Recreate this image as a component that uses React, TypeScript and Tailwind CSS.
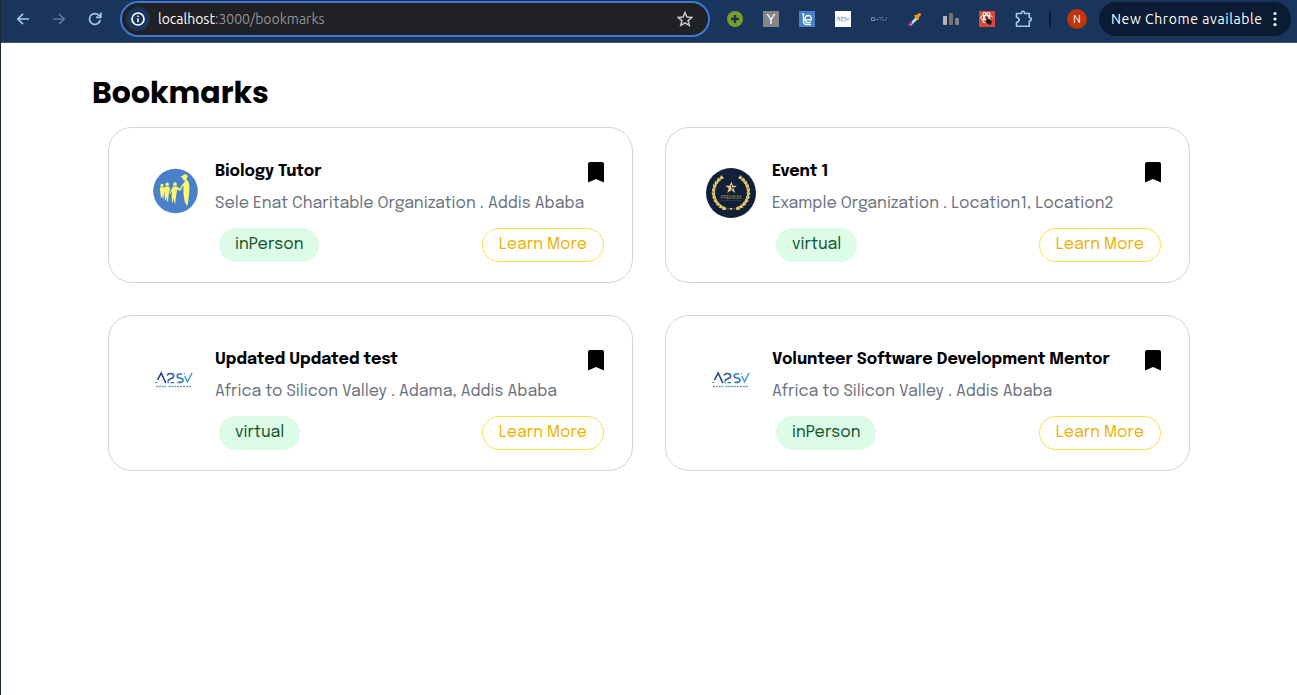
import React from "react";

type LogoKind = "family" | "premium" | "a2sv";

interface Bookmark {
  title: string;
  detail: string;
  mode: "inPerson" | "virtual";
  logo: LogoKind;
}

const bookmarks: Bookmark[] = [
  {
    title: "Biology Tutor",
    detail: "Sele Enat Charitable Organization . Addis Ababa",
    mode: "inPerson",
    logo: "family",
  },
  {
    title: "Event 1",
    detail: "Example Organization . Location1, Location2",
    mode: "virtual",
    logo: "premium",
  },
  {
    title: "Updated Updated test",
    detail: "Africa to Silicon Valley . Adama, Addis Ababa",
    mode: "virtual",
    logo: "a2sv",
  },
  {
    title: "Volunteer Software Development Mentor",
    detail: "Africa to Silicon Valley . Addis Ababa",
    mode: "inPerson",
    logo: "a2sv",
  },
];

function FamilyLogo() {
  return (
    <svg width="50" height="50" viewBox="0 0 50 50">
      <circle cx="26.5" cy="23" r="22.3" fill="#4a7fca" />
      <g fill="#f8f872">
        <circle cx="13" cy="17.300" r="1.600" />
        <path d="M11 19.300h4l.8 2.500-.8 1v3l-.5 5h-.8l-.5-4-.6 3h-.8l-.5-6-.5-2z" />
        <circle cx="18.200" cy="16.200" r="1.800" />
        <path d="M16 18.500h4.200l.9 4-1 1-.5 4-.5 6h-.9l-.7-5-.6 4h-.9l-.6-8-.8-3z" />
        <circle cx="26" cy="16.200" r="1.900" />
        <path d="M24 18.500h4l3 2.500 2-1.500v1.300l-2 2-3-1-.4 3.500-.7 4-.6 6h-.9l-.7-5-.8 4h-.9l-.3-6 .2-5-1.700 2.500-.8-.5z" />
        <path d="M31.500 8.500l2.500-1 1-1.300 2.800.2 1 2.300-1 1.300-.3 1.500 2.500 3 .5 6-.7 8-1 8-1 1.500-.8-2.500-1-.5-1.400-8-.2-6 .3-3.200-2.900 2.700-1-.4 3.100-4 1.700-2.100.4-1.500-1.700-.3-.4-1.500z" />
      </g>
    </svg>
  );
}

const laurel = Array.from({ length: 11 }, (_, i) => {
  const r = 108 + i * 12.4;
  const a = (r * Math.PI) / 180;
  return { x: 25 + 17.4 * Math.cos(a), y: 24.3 + 17.4 * Math.sin(a), r };
});

function LaurelBranch() {
  return (
    <g fill="#e3c56b">
      {laurel.map((leaf) => (
        <g key={leaf.r} transform={`translate(${leaf.x} ${leaf.y}) rotate(${leaf.r})`}>
          <ellipse cx="1.3" cy="0.6" rx="2.200" ry="1.150" transform="rotate(55)" />
          <ellipse cx="-1.3" cy="0.6" rx="2.200" ry="1.150" transform="rotate(-55)" />
        </g>
      ))}
    </g>
  );
}

function PremiumLogo() {
  return (
    <svg width="50" height="50" viewBox="0 0 50 50">
      <circle cx="25" cy="25" r="25" fill="#12203a" />
      <LaurelBranch />
      <g transform="translate(50 0) scale(-1 1)">
        <LaurelBranch />
      </g>
      <path d="M25.500 13.500l1.300 4.200 4.200.1-3.500 2.500 1.700 4.700-4-2.700-4 2.700 1.500-4.700-3.500-2.500 4.500-.1z" fill="#dfc98d" />
      <path d="M25.500 17v3l2.500-.5-2.500 1.500 1 2.500" stroke="#12203a" strokeWidth=".6" fill="none" />
      <text x="25" y="30.800" textAnchor="middle" fontSize="5" textLength="21" className="font-['Liberation_Sans']" fill="#9b8150">PREMIUM</text>
      <path d="M15 32.500h20" stroke="#5f553f" strokeWidth=".7" strokeDasharray="1.200 .8" />
      <path d="M21 40.800h8" stroke="#b99745" strokeWidth=".6" />
      <circle cx="25" cy="41" r="1" fill="#f2da80" />
    </svg>
  );
}

function A2svMark() {
  return (
    <>
      <g fill="none" strokeWidth="1.6">
        <path d="M8.500 24l3.700-7L16.800 27" stroke="#243d7c" />
        <path d="M18 19.500q1-2 3.300-2 3.400 0 3.400 2.400 0 1.800-2.500 2.500-3.200 1-3.200 3" stroke="#315d9c" />
        <path d="M33 18h-2.500q-2.300 0-2.300 2 0 1.800 2.500 2 3.300.2 3.300 2.200t-2.500 2.200h-3" stroke="#3778b4" />
        <path d="M35.800 20l2.700 5.800L43 17" stroke="#459ed1" />
      </g>
      <path d="M6.300 26.500h1.700M18.500 26.700h1.300M21.500 26.700h3.500M34.700 17.500h1.200" stroke="#3273ad" strokeWidth="1.200" />
    </>
  );
}

function A2svLogo() {
  return (
    <svg width="50" height="50" viewBox="0 0 50 50">
      <A2svMark />
      <path d="M7 30.500h10.500M19.500 30.500h23" stroke="#6f9dbd" strokeWidth="1.400" strokeDasharray="2 .9" />
    </svg>
  );
}

function Logo({ kind }: { kind: LogoKind }) {
  if (kind === "family") return <FamilyLogo />;
  if (kind === "premium") return <PremiumLogo />;
  return <A2svLogo />;
}

function BookmarkCard({ item }: { item: Bookmark }) {
  return (
    <article className="flex h-[156px] gap-4 rounded-3xl border border-[#d1d5db] pl-10 pr-7 pt-7">
      <div className="mt-3 h-[50px] w-[50px] shrink-0">
        <Logo kind={item.logo} />
      </div>
      <div className="min-w-0 flex-1">
        <div className="flex h-9 items-start justify-between">
          <h2 className="whitespace-nowrap pt-1 text-base leading-6 font-bold text-black">{item.title}</h2>
          <svg className="mt-1.5" width="16" height="21" viewBox="0 0 16 21">
            <path d="M2 0h12q2 0 2 2v18.500l-8-3.500-8 3.500V2q0-2 2-2z" fill="#000" />
          </svg>
        </div>
        <p className="h-9 whitespace-nowrap text-base leading-6 text-[#6b7280]">{item.detail}</p>
        <div className="flex items-center justify-between pl-1">
          <span className="flex h-[34px] items-center rounded-full bg-[#dcfce7] px-4 text-base text-[#14532d]">
            {item.mode}
          </span>
          <button className="flex h-[34px] w-[122px] items-center justify-center whitespace-nowrap rounded-full border border-[#fde047] text-base text-[#eab308]">
            Learn More
          </button>
        </div>
      </div>
    </article>
  );
}

function Extensions() {
  return (
    <div className="ml-[17px] flex shrink-0 items-center gap-5">
      <svg width="16" height="16" viewBox="0 0 16 16">
        <circle cx="8" cy="8" r="8" fill="#789f22" />
        <path d="M8 4v8M4 8h8" stroke="#1a3358" strokeWidth="2.400" />
      </svg>
      <div className="flex h-4 w-4 items-center justify-center bg-[#858585] font-['Liberation_Sans'] text-[14px] leading-4 text-white">Y</div>
      <svg width="16" height="16" viewBox="0 0 16 16">
        <path d="M0 0h16v16H0z" fill="#4683c6" />
        <path d="M3 3.200h2M4.500 2.500v8q0 3 3.500 3h4M5 8.800h7.300q.3-4.300-3-4.300Q6.200 4.500 6.200 8q0 3.600 3 3.600 1.700 0 2.800-.8" fill="none" stroke="#fff" strokeWidth="1.300" />
      </svg>
      <svg width="16" height="16" viewBox="0 0 16 16">
        <path d="M0 0h16v16H0z" fill="#fff" />
        <g transform="translate(-.9 -.2) scale(.36)"><A2svMark /></g>
        <path d="M2 10h12" stroke="#b7cddd" strokeWidth=".7" />
      </svg>
      <svg width="16" height="16" viewBox="0 0 16 16" fill="none" stroke="#7e879a">
        <path d="M.5 6.500h3v3h-3zM3 9.500h1.500" />
        <path d="M5 8.500h2.500" />
        <path d="M8 6.500h3M9.500 7.500v2M11.500 6v2l1 1.500 1-1.500 1 1.500 1-1.500V6" strokeDasharray="1 .8" />
      </svg>
      <svg width="16" height="16" viewBox="0 0 16 16">
        <path d="M2 14l2-3 5-5 2 2-5 5-3 2z" fill="#a9def4" />
        <path d="M2 12l2.500-1.500 1 1.500-3 2.500H1z" fill="#e91e63" />
        <path d="M7 4l2 .3L12 2q2.500-.3 2 2l-2.300 2.500.3 2-1 .5-4-4z" fill="#ff9200" />
      </svg>
      <svg width="16" height="16" viewBox="0 0 16 16">
        <rect y="5" width="4" height="9" rx="1" fill="#b6b6b6" />
        <rect x="6" y="2" width="4" height="12" rx="1" fill="#737373" />
        <rect x="12" y="7" width="4" height="7" rx="1" fill="#858585" />
      </svg>
      <svg width="16" height="16" viewBox="0 0 16 16">
        <path d="M0 0h16v16H0z" fill="#da4837" />
        <g fill="none" stroke="#fff">
          <ellipse cx="7.500" cy="6.500" rx="6" ry="2.300" />
          <ellipse cx="7.500" cy="6.500" rx="2.300" ry="5.500" transform="rotate(30 7.500 6.500)" />
          <ellipse cx="7.500" cy="6.500" rx="2.300" ry="5.500" transform="rotate(-30 7.500 6.500)" />
        </g>
        <ellipse cx="9.800" cy="10.500" rx="2.500" ry="3.300" transform="rotate(-45 9.800 10.500)" fill="#221a18" />
        <path d="M7 6l1.500 2M12 8l1.500-1M6 11l2-1M11 13l1 1" stroke="#221a18" />
      </svg>
      <svg width="17" height="18" viewBox="0 0 17 18" fill="none" stroke="#a8c5f0" strokeWidth="1.600" strokeLinejoin="round">
        <path d="M1.500 3.500h5V2.800a1.500 1.500 0 0 1 3 0v.7h4.800v4.300h.6a1.500 1.500 0 0 1 0 3h-.6v5.400H1.500v-3.800q2.700-.5 2.700-2.600T1.500 7.200z" />
      </svg>
    </div>
  );
}

function BrowserBar() {
  return (
    <header className="flex h-[43px] items-start border-b border-[#3d5678] bg-[#1a355b] font-['Ubuntu','Noto_Sans',sans-serif]">
      <div className="flex h-[38px] shrink-0 items-center pl-[15px]">
        <svg width="14" height="14" viewBox="0 0 14 14" fill="none" stroke="#a8c5f0" strokeWidth="1.700">
          <path d="M13 7H2M7 1.800L1.800 7 7 12.200" />
        </svg>
        <svg className="ml-[22px]" width="14" height="14" viewBox="0 0 14 14" fill="none" stroke="#5b7598" strokeWidth="1.700">
          <path d="M1 7h11M7 1.800L12.200 7 7 12.200" />
        </svg>
        <svg className="ml-[22px]" width="14" height="14" viewBox="0 0 14 14" fill="none" stroke="#a8c5f0" strokeWidth="1.700">
          <path d="M12.200 8A5.400 5.400 0 1 1 10.800 3.200L12.500 5" />
          <path d="M12.800.5V5.300H8" />
        </svg>
      </div>
      <div className="ml-[18px] mt-px flex h-9 w-[590px] shrink-0 items-center rounded-full border-2 border-[#3e78d4] bg-[#202124] pl-1 pr-[15px]">
        <div className="flex h-6 w-6 items-center justify-center rounded-full bg-[#1a355b]">
          <svg width="14" height="14" viewBox="0 0 14 14">
            <circle cx="7" cy="7" r="6" fill="none" stroke="#fff" strokeWidth="1.700" />
            <path d="M7 6.200v4M7 3.500v1.600" stroke="#fff" strokeWidth="1.500" />
          </svg>
        </div>
        <div className="ml-2 flex-1 whitespace-nowrap text-[14px] leading-5 text-[#8f9296]">
          <span className="text-white">localhost</span>:3000/bookmarks
        </div>
        <svg width="16" height="16" viewBox="0 0 16 16" fill="none" stroke="#c7c7c7" strokeWidth="1.500">
          <path d="M8 1.500l1.900 4.500 5 .4-3.800 3.200 1.200 4.800L8 11.900l-4.300 2.500 1.200-4.800L1.100 6.400l5-.4z" />
        </svg>
      </div>
      <div className="flex h-[38px] min-w-0 flex-1 items-center">
        <Extensions />
        <div className="ml-[17px] h-4 w-0.5 shrink-0 bg-[#0a1b33]" />
        <div className="ml-4 flex h-5 w-5 shrink-0 items-center justify-center rounded-full bg-[#c0360c] text-[11px] text-white">N</div>
        <div className="ml-3 flex h-[34px] w-[192px] shrink-0 items-center rounded-full bg-[#0a1b33] pl-3 text-[14px] text-white">
          <span className="w-[152px] whitespace-nowrap tracking-[0.58px]">New Chrome available</span>
          <svg className="ml-[10px]" width="4" height="16" viewBox="0 0 4 16" fill="#fff">
            <circle cx="2" cy="2.500" r="1.600" />
            <circle cx="2" cy="8" r="1.600" />
            <circle cx="2" cy="13.500" r="1.600" />
          </svg>
        </div>
      </div>
    </header>
  );
}

export default function App() {
  return (
    <div className="h-[695px] w-[1297px] overflow-hidden border-l border-[#1b2932] bg-white font-['Epilogue',Inter,sans-serif]">
      <BrowserBar />
      <main className="pl-[91px] pt-[30px]">
        <h1 className="h-[54px] font-['Poppins',Inter,sans-serif] text-3xl leading-10 font-bold text-black">Bookmarks</h1>
        <section className="ml-4 grid w-[1082px] grid-cols-2 gap-8">
          {bookmarks.map((item) => (
            <BookmarkCard key={item.title} item={item} />
          ))}
        </section>
      </main>
    </div>
  );
}
